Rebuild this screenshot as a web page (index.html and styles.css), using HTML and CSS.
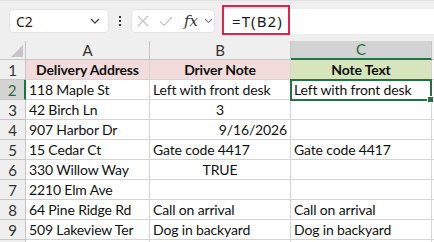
FILE: index.html
```html
<!DOCTYPE html>
<html>
<head>
<meta charset="utf-8">
<link rel="stylesheet" href="styles.css">
</head>
<body>
<div class="formula-bar">
  <div class="name-box">
    <span class="name-text">C2</span>
    <svg class="chev" width="10" height="6" viewBox="0 0 10 6"><path d="M1 1 L5 5 L9 1" fill="none" stroke="#444" stroke-width="1.3"/></svg>
  </div>
  <div class="dots"><i></i><i></i><i></i></div>
  <div class="fx-box">
    <svg width="12" height="12" viewBox="0 0 12 12"><path d="M1 1 L11 11 M11 1 L1 11" stroke="#c4c4c4" stroke-width="1.2" fill="none"/></svg>
    <svg width="14" height="11" viewBox="0 0 14 11"><path d="M1 5.5 L5 9.5 L13 1" stroke="#c4c4c4" stroke-width="1.2" fill="none"/></svg>
    <span class="fx">fx</span>
    <svg width="9" height="6" viewBox="0 0 9 6"><path d="M1 1 L4.5 4.5 L8 1" fill="none" stroke="#888" stroke-width="1.1"/></svg>
  </div>
  <div class="formula-input">
    <div class="formula-hl">=T(B2)</div>
  </div>
</div>
<div class="sheet">
  <div class="corner"><svg width="12" height="12" viewBox="0 0 12 12"><polygon points="0,12 12,12 12,0" fill="#c6c6c6"/></svg></div>
  <div class="ch">A</div>
  <div class="ch">B</div>
  <div class="ch ch-sel">C</div>
  <div class="ch ch-last"></div>

  <div class="rh">1</div>
  <div class="c hdr pink">Delivery Address</div>
  <div class="c hdr pink">Driver Note</div>
  <div class="c hdr green">Note Text</div>
  <div class="c"></div>

  <div class="rh rh-sel">2</div>
  <div class="c">118 Maple St</div>
  <div class="c">Left with front desk</div>
  <div class="c sel">Left with front desk<span class="handle"></span></div>
  <div class="c"></div>

  <div class="rh">3</div>
  <div class="c">42 Birch Ln</div>
  <div class="c center">3</div>
  <div class="c"></div>
  <div class="c"></div>

  <div class="rh">4</div>
  <div class="c">907 Harbor Dr</div>
  <div class="c right">9/16/2026</div>
  <div class="c"></div>
  <div class="c"></div>

  <div class="rh">5</div>
  <div class="c">15 Cedar Ct</div>
  <div class="c">Gate code 4417</div>
  <div class="c">Gate code 4417</div>
  <div class="c"></div>

  <div class="rh">6</div>
  <div class="c">330 Willow Way</div>
  <div class="c center">TRUE</div>
  <div class="c"></div>
  <div class="c"></div>

  <div class="rh">7</div>
  <div class="c">2210 Elm Ave</div>
  <div class="c"></div>
  <div class="c"></div>
  <div class="c"></div>

  <div class="rh">8</div>
  <div class="c">64 Pine Ridge Rd</div>
  <div class="c">Call on arrival</div>
  <div class="c">Call on arrival</div>
  <div class="c"></div>

  <div class="rh">9</div>
  <div class="c">509 Lakeview Ter</div>
  <div class="c">Dog in backyard</div>
  <div class="c">Dog in backyard</div>
  <div class="c"></div>

  <div class="rh"></div>
  <div class="c"></div>
  <div class="c"></div>
  <div class="c"></div>
  <div class="c"></div>
</div>
</body>
</html>
```
FILE: styles.css
```css
html, body {
  margin: 0;
  padding: 0;
  background: #ffffff;
  overflow: hidden;
}
body {
  width: 434px;
  height: 242px;
  font-family: "Lato", "Liberation Sans", sans-serif;
}
.formula-bar {
  height: 41px;
  box-sizing: border-box;
  background: #efefef;
  border-top: 1px solid #e2e2e2;
  display: flex;
  align-items: flex-start;
  padding-top: 8px;
  padding-left: 9px;
}
.name-box {
  width: 100px;
  height: 24px;
  box-sizing: border-box;
  background: #fff;
  border: 1px solid #e4e4e4;
  border-radius: 4px;
  display: flex;
  align-items: center;
  justify-content: space-between;
  padding: 0 8px 0 6px;
  font-family: "Noto Sans", "Open Sans", sans-serif;
  font-size: 14px;
  color: #222;
}
.dots {
  width: 22px;
  height: 24px;
  display: flex;
  flex-direction: column;
  align-items: center;
  justify-content: center;
  gap: 2px;
}
.dots i {
  display: block;
  width: 2px;
  height: 2px;
  background: #333;
}
.fx-box {
  width: 84px;
  height: 24px;
  box-sizing: border-box;
  background: #fff;
  border: 1px solid #e4e4e4;
  border-radius: 4px;
  display: flex;
  align-items: center;
  padding-left: 5px;
  gap: 10px;
}
.fx {
  font-family: "DejaVu Serif", "Liberation Serif", serif;
  font-style: italic;
  font-size: 15px;
  color: #333;
  margin-left: 1px;
  margin-right: -4px;
}
.formula-input {
  flex: 1;
  margin-left: 7px;
  height: 25px;
  background: #fff;
  border-radius: 3px 0 0 3px;
  display: flex;
}
.formula-hl {
  margin-top: -4px;
  width: 68px;
  height: 30px;
  box-sizing: border-box;
  border: 2px solid #e3204e;
  padding-left: 8px;
  font-family: "Noto Sans", "Open Sans", sans-serif;
  font-size: 15px;
  line-height: 28px;
  color: #1a1a1a;
  letter-spacing: 1.1px;
}
.sheet {
  display: grid;
  grid-template-columns: 26px 124px 141px 141px 2px;
  grid-template-rows: 19px;
  grid-auto-rows: 20px;
  font-size: 14px;
  letter-spacing: -0.15px;
  color: #111;
}
.corner, .ch, .rh {
  background: #efefef;
  box-sizing: border-box;
  border-right: 1px solid #c6c6c6;
  border-bottom: 1px solid #c6c6c6;
  color: #333;
  font-size: 15px;
  letter-spacing: 0;
  text-align: center;
}
.corner {
  display: flex;
  align-items: flex-end;
  justify-content: flex-end;
  padding: 0 2px 2px 0;
}
.corner svg { display: block; }
.ch { line-height: 18px; }
.ch-sel {
  background: #d3d3d3;
  color: #1e6e3f;
  border-bottom: 2px solid #217346;
  line-height: 17px;
}
.ch-last { border-right: none; }
.rh { line-height: 20px; }
.rh-sel {
  background: #d3d3d3;
  color: #1e6e3f;
  border-right: 2px solid #217346;
}
.c {
  box-sizing: border-box;
  border-right: 1px solid #d4d4d4;
  border-bottom: 1px solid #d4d4d4;
  padding: 0 3px;
  line-height: 20px;
  white-space: nowrap;
  overflow: visible;
}
.hdr {
  font-weight: bold;
  text-align: center;
}
.pink { background: #f2dcdb; }
.green { background: #d8e4bc; }
.center { text-align: center; }
.right { text-align: right; }
.sel { position: relative; }
.sel::after {
  content: "";
  position: absolute;
  top: -1px;
  left: -1px;
  right: -1px;
  bottom: -2px;
  border: 2px solid #217346;
  pointer-events: none;
}
.handle {
  position: absolute;
  right: -3px;
  bottom: -4px;
  width: 5px;
  height: 5px;
  background: #217346;
  border: 1px solid #fff;
  z-index: 2;
}
```
